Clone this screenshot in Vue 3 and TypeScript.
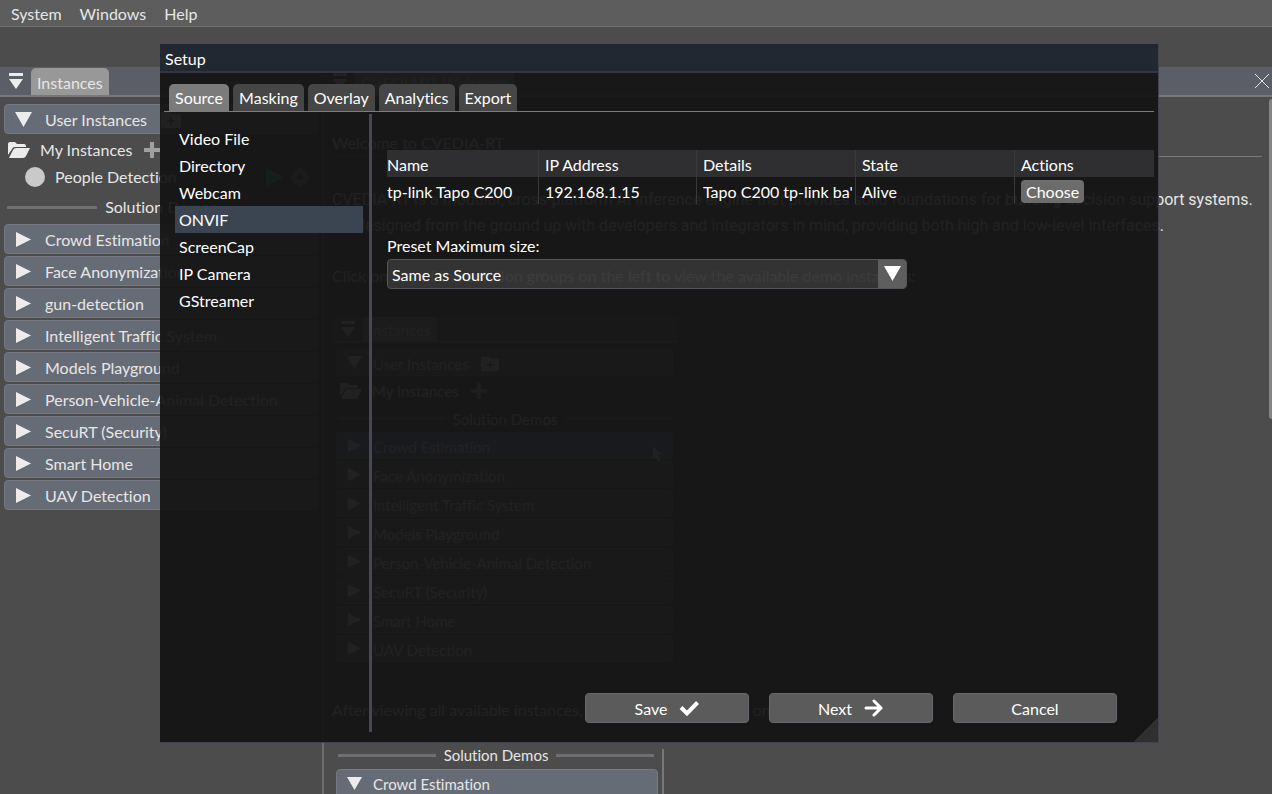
<script setup lang="ts">
import { ref } from 'vue'

const menus: string[] = ['System', 'Windows', 'Help']

const demos: string[] = [
  'Crowd Estimation',
  'Face Anonymization',
  'gun-detection',
  'Intelligent Traffic System',
  'Models Playground',
  'Person-Vehicle-Animal Detection',
  'SecuRT (Security)',
  'Smart Home',
  'UAV Detection',
]
const previewDemos: string[] = demos.filter((name) => name !== 'gun-detection')

const tabs: string[] = ['Source', 'Masking', 'Overlay', 'Analytics', 'Export']
const activeTab = ref('Source')

const sources: string[] = ['Video File', 'Directory', 'Webcam', 'ONVIF', 'ScreenCap', 'IP Camera', 'GStreamer']
const activeSource = ref('ONVIF')

interface Device {
  name: string
  ip: string
  details: string
  state: string
}
const devices: Device[] = [
  { name: 'tp-link Tapo C200', ip: '192.168.1.15', details: "Tapo C200 tp-link ba'", state: 'Alive' },
]
const maxSize = ref('Same as Source')
</script>

<template>
  <div class="app">
    <nav class="menubar">
      <button v-for="m in menus" :key="m" class="menu">{{ m }}</button>
    </nav>

    <div class="dock">
      <aside class="instances">
        <header class="dock-bar">
          <svg class="collapse" viewBox="0 0 16 16"><path d="M1 0h14v3H1zM1 6h14l-7 10z" /></svg>
          <button class="dock-tab">Instances</button>
        </header>
        <div class="tree">
          <button class="node">
            <svg class="tri" viewBox="0 0 17 15"><path d="M0 0h17L8.500 15z" /></svg>
            <span>User Instances</span>
            <svg class="folder-add" viewBox="0 0 20 16"><path fill-rule="evenodd" d="M2 0h6l2 2h8q2 0 2 2v10q0 2-2 2H2q-2 0-2-2V2q0-2 2-2zM9 5v3H6v2h3v3h2v-3h3V8h-3V5z" /></svg>
          </button>
          <div class="group">
            <svg class="folder" viewBox="0 0 22 16"><path d="M0 13V2q0-2 2-2h5l2 2h7q2 0 2 2v1H7Q5 5 4 7zM1 16l4-8q1-2 3-2h14l-4 8q-1 2-3 2z" /></svg>
            <span>My Instances</span>
            <svg class="plus" viewBox="0 0 16 16"><path d="M6 0h4v6h6v4h-6v6H6v-6H0V6h6z" /></svg>
          </div>
          <div class="instance">
            <span class="dot"></span>
            <span class="instance-name">People Detection</span>
            <svg class="play" viewBox="0 0 17 18"><path d="M0 0l17 9-17 9z" /></svg>
            <svg class="gear" viewBox="0 0 18 18"><circle cx="9" cy="9" r="5" /><path d="M9 0v4M9 14v4M0 9h4M14 9h4M3 3l3 3M12 12l3 3M3 15l3-3M12 6l3-3" /></svg>
          </div>
          <div class="divider"><span>Solution Demos</span></div>
          <button v-for="d in demos" :key="d" class="node">
            <svg class="tri" viewBox="0 0 17 15"><path d="M1 0l15 7.500-15 7.500z" /></svg>
            <span>{{ d }}</span>
          </button>
        </div>
      </aside>

      <main class="welcome">
        <header class="dock-bar">
          <svg class="collapse" viewBox="0 0 16 16"><path d="M1 0h14v3H1zM1 6h14l-7 10z" /></svg>
          <button class="dock-tab">CVEDIART Welcome</button>
          <button class="close" aria-label="Close">
            <svg viewBox="0 0 16 16"><path d="M1 1l14 14M15 1L1 15" /></svg>
          </button>
        </header>
        <div class="article">
          <h1>Welcome to CVEDIA-RT</h1>
          <p class="intro">
            CVEDIA-RT is a modular, cross-platform AI inference engine that provides solid foundations for building decision support systems.<br />
            It's designed from the ground up with developers and integrators in mind, providing both high and low-level interfaces.
          </p>
          <p class="hint">Click on any of the solution groups on the left to view the available demo instances:</p>

          <section class="preview">
            <header class="dock-bar">
              <svg class="collapse" viewBox="0 0 16 16"><path d="M1 0h14v3H1zM1 6h14l-7 10z" /></svg>
              <span class="dock-tab">Instances</span>
            </header>
            <div class="tree">
              <div class="node">
                <svg class="tri" viewBox="0 0 17 15"><path d="M0 0h17L8.500 15z" /></svg>
                <span>User Instances</span>
                <svg class="folder-add" viewBox="0 0 20 16"><path fill-rule="evenodd" d="M2 0h6l2 2h8q2 0 2 2v10q0 2-2 2H2q-2 0-2-2V2q0-2 2-2zM9 5v3H6v2h3v3h2v-3h3V8h-3V5z" /></svg>
              </div>
              <div class="group">
                <svg class="folder" viewBox="0 0 22 16"><path d="M0 13V2q0-2 2-2h5l2 2h7q2 0 2 2v1H7Q5 5 4 7zM1 16l4-8q1-2 3-2h14l-4 8q-1 2-3 2z" /></svg>
                <span>My Instances</span>
                <svg class="plus" viewBox="0 0 16 16"><path d="M6 0h4v6h6v4h-6v6H6v-6H0V6h6z" /></svg>
              </div>
              <div class="divider"><span>Solution Demos</span></div>
              <div v-for="(d, i) in previewDemos" :key="d" class="node" :class="{ hovered: i === 0 }">
                <svg class="tri" viewBox="0 0 17 15"><path d="M1 0l15 7.500-15 7.500z" /></svg>
                <span>{{ d }}</span>
                <svg v-if="i === 0" class="cursor" viewBox="0 0 9 15"><path d="M0 0l9 9H5l2 5-2 1-2-5-3 3z" /></svg>
              </div>
            </div>
          </section>

          <p class="after">After viewing all available instances, start one up by clicking on</p>

          <section class="preview-open">
            <div class="divider"><span>Solution Demos</span></div>
            <div class="node">
              <svg class="tri" viewBox="0 0 17 15"><path d="M0 0h17L8.500 15z" /></svg>
              <span>Crowd Estimation</span>
            </div>
          </section>
        </div>
        <div class="scroll-thumb"></div>
      </main>
    </div>

    <section class="dialog" role="dialog" aria-labelledby="setup-title">
      <h2 id="setup-title" class="title">Setup</h2>
      <div class="tabs" role="tablist">
        <button
          v-for="t in tabs"
          :key="t"
          class="tab"
          role="tab"
          :class="{ active: t === activeTab }"
          :aria-selected="t === activeTab"
          @click="activeTab = t"
        >{{ t }}</button>
      </div>
      <div class="body">
        <div class="sources">
          <button
            v-for="s in sources"
            :key="s"
            class="source"
            :class="{ active: s === activeSource }"
            @click="activeSource = s"
          >{{ s }}</button>
        </div>
        <div class="content">
          <table class="devices">
            <colgroup>
              <col class="c-name" /><col class="c-ip" /><col class="c-mid" /><col class="c-mid" /><col />
            </colgroup>
            <thead>
              <tr><th>Name</th><th>IP Address</th><th>Details</th><th>State</th><th>Actions</th></tr>
            </thead>
            <tbody>
              <tr v-for="d in devices" :key="d.ip">
                <td>{{ d.name }}</td>
                <td>{{ d.ip }}</td>
                <td>{{ d.details }}</td>
                <td>{{ d.state }}</td>
                <td class="act"><button class="choose">Choose</button></td>
              </tr>
            </tbody>
          </table>
          <label class="size-label" for="max-size">Preset Maximum size:</label>
          <div class="select">
            <select id="max-size" v-model="maxSize">
              <option>Same as Source</option>
            </select>
            <span class="arrow"><svg viewBox="0 0 17 15"><path d="M0 0h17L8.500 15z" /></svg></span>
          </div>
          <div class="actions">
            <button class="action">
              Save
              <svg viewBox="0 0 20 18"><path class="stroke" d="M2 8.500l6 6L18.500 3.500" /></svg>
            </button>
            <button class="action">
              Next
              <svg viewBox="0 0 20 18"><path class="stroke round" d="M2 9h15M10 2l7 7-7 7" /></svg>
            </button>
            <button class="action">Cancel</button>
          </div>
        </div>
      </div>
      <span class="grip"></span>
    </section>
  </div>
</template>

<style>
body {
  margin: 0;
  background: #4c4c4c;
}
</style>

<style scoped>
.app {
  position: relative;
  display: flex;
  flex-direction: column;
  height: 100vh;
  overflow: hidden;
  background: #4c4c4c;
  color: #e6e6e6;
  font: 16px/26px Lato, sans-serif;
  font-variant-ligatures: none;
}
*,
*::before,
*::after {
  box-sizing: border-box;
}
button,
select {
  margin: 0;
  padding: 0;
  border: 0;
  background: none;
  color: inherit;
  font: inherit;
  font-variant-ligatures: none;
  white-space: nowrap;
}
svg {
  display: block;
  flex: none;
  fill: #ececec;
}
.menubar {
  flex: none;
  display: flex;
  gap: 18px;
  height: 27px;
  padding: 2px 11px 0;
  background: #5d5d5d;
  border-bottom: 1px solid #707070;
}
.menu {
  line-height: 24px;
}
.dock {
  flex: 1;
  display: flex;
  min-height: 0;
  margin-top: 40px;
}
.instances {
  flex: none;
  width: 324px;
  border-right: 2px solid #6c6c72;
}
.dock-bar {
  display: flex;
  align-items: center;
  height: 30px;
  padding: 0 2px 0 8px;
  background: #5b5e66;
  border-bottom: 2px solid #77787c;
}
.collapse {
  width: 16px;
  height: 16px;
}
.dock-tab {
  align-self: flex-end;
  height: 27px;
  margin-left: 7px;
  padding: 2px 6px 0;
  border-radius: 5px 5px 0 0;
  background: #989898;
  line-height: 26px;
}
.close {
  margin-left: auto;
}
.close svg {
  width: 16px;
  height: 16px;
  stroke: #e6e6e6;
}
.tree {
  display: flex;
  flex-direction: column;
  gap: 2px;
  padding: 7px 5px 0 4px;
}
.node {
  flex: none;
  display: flex;
  align-items: center;
  width: 100%;
  height: 30px;
  padding: 2px 10px 0;
  border: 1px solid #767883;
  border-radius: 4px;
  background: #666c75;
  line-height: 26px;
  white-space: nowrap;
}
.tri {
  width: 17px;
  height: 15px;
  margin: 0 13px 2px 0;
}
.folder-add {
  width: 20px;
  height: 16px;
  margin-left: 14px;
}
.group {
  display: flex;
  align-items: center;
  height: 28px;
  padding-left: 4px;
}
.folder {
  width: 22px;
  height: 16px;
  margin-right: 10px;
}
.plus {
  width: 16px;
  height: 16px;
  margin-left: 12px;
  fill: #a0a0a0;
}
.instance {
  display: flex;
  align-items: center;
  height: 22px;
  padding: 0 8px 0 21px;
}
.dot {
  width: 20px;
  height: 20px;
  margin-right: 10px;
  border-radius: 50%;
  background: #c9c9c9;
}
.instance-name {
  flex: 1;
}
.play {
  width: 17px;
  height: 18px;
  margin-right: 8px;
  fill: #3fd858;
}
.gear {
  width: 18px;
  height: 18px;
  fill: none;
  stroke: #8c8c8c;
  stroke-width: 4px;
}
.divider {
  display: flex;
  align-items: center;
  gap: 8px;
  height: 32px;
  padding: 2px 2px 0 3px;
  white-space: nowrap;
}
.divider::before,
.divider::after {
  content: '';
  flex: 1;
  height: 3px;
  background: #6e6e73;
}
.welcome {
  position: relative;
  flex: 1;
  min-width: 0;
}
.article {
  padding: 33px 10px 0 8px;
}
h1 {
  margin: 0;
  border-bottom: 1px solid #77777b;
  font-size: 16px;
  font-weight: 400;
  line-height: 26px;
}
p {
  margin: 0;
  white-space: nowrap;
}
.intro {
  margin-top: 30px;
  font-family: Roboto, sans-serif;
}
.hint {
  margin-top: 24px;
}
.preview {
  width: 346px;
  height: 363px;
  margin-top: 27px;
  font-size: 15px;
}
.preview .dock-bar {
  height: 27px;
}
.preview .dock-tab {
  height: 24px;
  line-height: 22px;
}
.preview .tree {
  padding-top: 6px;
}
.preview .node {
  height: 27px;
}
.preview .node.hovered {
  background: #5878a0;
}
.preview .group,
.preview .divider {
  height: 25px;
}
.preview .folder-add {
  width: 18px;
  margin-left: 12px;
}
.preview .tri,
.preview-open .tri {
  width: 15px;
  margin-right: 11px;
}
.cursor {
  width: 9px;
  height: 15px;
  margin: 14px 0 0 auto;
}
.after {
  margin-top: 18px;
}
.preview-open {
  width: 332px;
  margin-top: 26px;
  padding: 0 4px;
  border-right: 2px solid #77777b;
  font-size: 15px;
}
.preview-open .divider {
  height: 20px;
  padding: 0 4px 8px 2px;
}
.preview-open .node {
  padding-top: 0;
}
.scroll-thumb {
  position: absolute;
  top: 32px;
  right: 0;
  width: 3px;
  height: 320px;
  border-radius: 3px 0 0 3px;
  background: #858585;
}
.dialog {
  position: absolute;
  inset: 44px 113px 51px 160px;
  display: flex;
  flex-direction: column;
  border: solid #42434c;
  border-width: 0 1px 1px 0;
  background: rgba(20, 20, 20, 0.94);
  color: #fff;
}
.title {
  flex: none;
  height: 29px;
  margin: 0;
  padding: 2px 5px 0;
  border-bottom: 2px solid #323642;
  background: #222831;
  font-size: 16px;
  font-weight: 400;
  line-height: 26px;
}
.tabs {
  flex: none;
  display: flex;
  gap: 4px;
  margin: 11px 4px 0;
  padding-left: 5px;
  border-bottom: 1px solid #7c7c7c;
}
.tab {
  height: 27px;
  padding: 0 6px;
  border-radius: 5px 5px 0 0;
  background: #464646;
}
.tab.active {
  background: #7b7b7b;
}
.body {
  flex: 1;
  display: flex;
  min-height: 0;
  padding: 2px 4px 10px 15px;
}
.sources {
  flex: none;
  width: 197px;
  padding: 11px 6px 0 0;
  border-right: 3px solid #484852;
}
.source {
  display: block;
  width: 100%;
  height: 27px;
  padding: 0 4px;
  line-height: 26px;
  text-align: left;
}
.source.active {
  background: #3b4552;
}
.content {
  flex: 1;
  display: flex;
  flex-direction: column;
  min-width: 0;
  padding: 36px 0 9px 15px;
}
.devices {
  width: 100%;
  table-layout: fixed;
  border-collapse: separate;
  border-spacing: 0;
}
.c-name {
  width: 152px;
}
.c-ip {
  width: 158px;
}
.c-mid {
  width: 159px;
}
.devices th,
.devices td {
  height: 27px;
  padding: 3px 0 0 6px;
  border-right: 1px solid #3a3a3c;
  overflow: hidden;
  font-weight: 400;
  line-height: 24px;
  text-align: left;
  white-space: nowrap;
}
.devices th {
  background: #2f2f31;
}
.devices th:first-child,
.devices td:first-child {
  padding-left: 0;
}
.devices th:last-child,
.devices td:last-child {
  border-right: 0;
}
.devices td.act {
  padding-top: 1px;
}
.choose {
  display: block;
  height: 23px;
  padding: 0 5px;
  border-radius: 4px;
  background: #6c6c6c;
  line-height: 23px;
}
.size-label {
  margin-top: 29px;
  line-height: 26px;
}
.select {
  position: relative;
  width: 520px;
  max-width: 100%;
}
.select select {
  display: block;
  width: 100%;
  height: 30px;
  padding: 2px 34px 0 4px;
  border: 1px solid #54545c;
  border-radius: 4px;
  appearance: none;
  background: rgba(255, 255, 255, 0.12);
}
.arrow {
  position: absolute;
  top: 1px;
  right: 1px;
  bottom: 1px;
  display: flex;
  justify-content: center;
  padding-top: 6px;
  width: 28px;
  border-radius: 0 3px 3px 0;
  background: #5e5e5e;
  pointer-events: none;
}
.arrow svg {
  width: 17px;
  height: 15px;
  fill: #fff;
}
.actions {
  display: flex;
  justify-content: flex-end;
  gap: 20px;
  margin-top: auto;
  padding-right: 37px;
}
.action {
  display: flex;
  align-items: center;
  justify-content: center;
  gap: 12px;
  width: 164px;
  height: 30px;
  padding-top: 2px;
  border: 1px solid #67676f;
  border-radius: 4px;
  background: #5b5b5b;
}
.action svg {
  width: 20px;
  height: 18px;
  margin-bottom: 3px;
}
.stroke {
  fill: none;
  stroke: #fff;
  stroke-width: 4px;
}
.stroke.round {
  stroke-width: 3px;
  stroke-linecap: round;
}
.grip {
  position: absolute;
  right: 0;
  bottom: 0;
  width: 24px;
  height: 24px;
  background: linear-gradient(135deg, transparent 50%, #2f2f2f 50%);
}
</style>
